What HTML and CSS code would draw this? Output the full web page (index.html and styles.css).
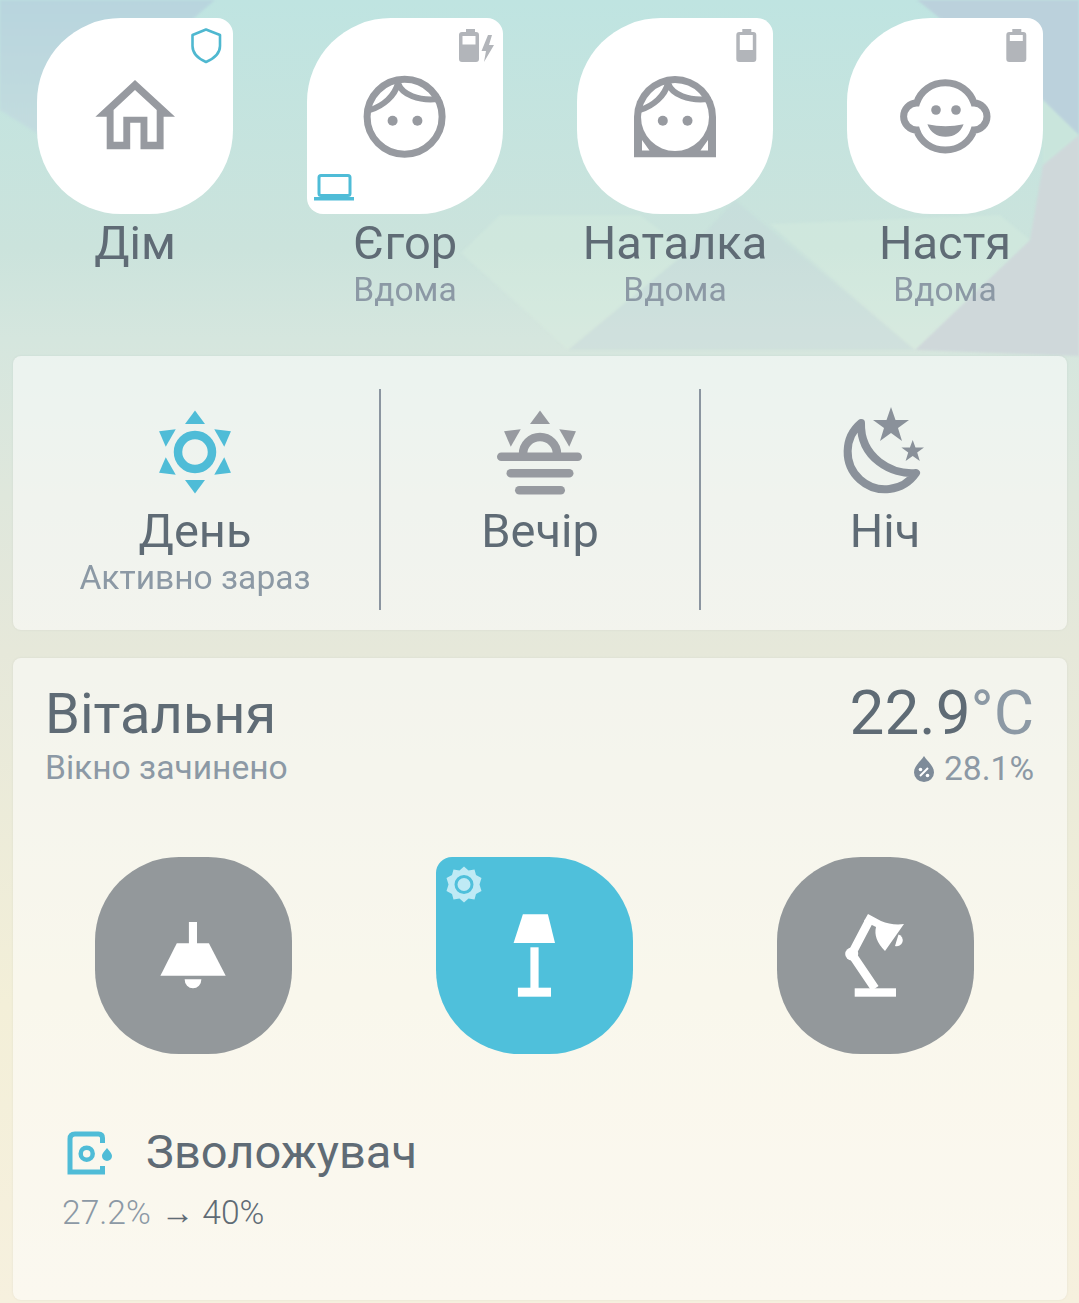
FILE: index.html
```html
<!DOCTYPE html>
<html lang="uk">
<head>
<meta charset="utf-8">
<title>Дім</title>
<link rel="stylesheet" href="styles.css">
</head>
<body>
<div class="screen">
  <svg class="backdrop" viewBox="0 0 1079 1303" width="1079" height="1303">
    <defs>
      <linearGradient id="bg" x1="0" y1="0" x2="0" y2="1">
        <stop offset="0" stop-color="#bfe4e1"/>
        <stop offset="0.19" stop-color="#cbe3dc"/>
        <stop offset="0.26" stop-color="#d5e6de"/>
        <stop offset="0.38" stop-color="#dfe7dc"/>
        <stop offset="0.5" stop-color="#e6e8da"/>
        <stop offset="0.77" stop-color="#f3efd8"/>
        <stop offset="1" stop-color="#f6f0de"/>
      </linearGradient>
      <linearGradient id="corner" x1="0" y1="0" x2="0" y2="1">
        <stop offset="0" stop-color="#b8d5de"/>
        <stop offset="1" stop-color="#c3dcdf"/>
      </linearGradient>
      <filter id="soften"><feGaussianBlur stdDeviation="1.200"/></filter>
    </defs>
    <rect width="1079" height="1303" fill="url(#bg)"/>
    <g filter="url(#soften)">
      <polygon points="0,0 215,0 110,90 40,135 0,110" fill="url(#corner)"/>
      <polygon points="461,253 568,350 688,251 640,215 500,215" fill="#dcf2e2" opacity=".3"/>
      <polygon points="735,200 915,350 568,350 688,251" fill="#c4d4dc" opacity=".3"/>
      <polygon points="770,224 915,350 1030,240 1000,215" fill="#dcf2e2" opacity=".3"/>
      <polygon points="1043,100 1079,135 1043,165" fill="#c9e5dc"/>
      <polygon points="1079,135 1043,165 1030,240 915,350 1079,356" fill="#cfd8da"/>
      <polygon points="917,0 1079,0 1079,135 1043,100" fill="#bbd1dc"/>
    </g>
  </svg>

  <div class="people">
    <div class="person">
      <div class="tile tile-corner-tr">
        <svg class="glyph" viewBox="0 0 196 196">
          <path class="grey" fill-rule="evenodd" d="M98 62L138 98.7H126.6V131.3H103.5V104.7H93.2V131.3H69.7V98.7H58.4ZM98 72L119.7 92V123.7H110.4V98.7H86.3V123.7H76.6V92Z"/>
          <path class="line-blue" d="M169 11.5L183 17V28C183 36 176 41 169 44C162 41 155.5 36 155.5 28V17Z"/>
        </svg>
      </div>
      <div class="name">Дім</div>
    </div>
    <div class="person">
      <div class="tile tile-corner-tr tile-corner-bl">
        <svg class="glyph" viewBox="0 0 196 196">
          <circle class="line-grey" cx="97.6" cy="98.7" r="37.5"/>
          <path class="line-grey hair" d="M91 65C95 77 112 83 131 81M91 65C88 78 76 88 63 92"/>
          <circle class="grey" cx="85.6" cy="102.7" r="5"/>
          <circle class="grey" cx="110.4" cy="102.7" r="5"/>
          <path class="soft" fill-rule="evenodd" d="M152 17a3 3 0 0 1 3-3h4v-3h9v3h1a3 3 0 0 1 3 3v24a3 3 0 0 1-3 3h-14a3 3 0 0 1-3-3ZM155.500 18v8.500h13V18Z"/>
          <polygon class="soft" points="181,17 174.500,33 179,33 177,44 187,27 182,27 185,17"/>
          <rect class="line-laptop" x="12" y="157.500" width="31" height="20" rx="2"/>
          <rect class="blue" x="7" y="179" width="40" height="3.500"/>
        </svg>
      </div>
      <div class="name">Єгор</div>
      <div class="sub">Вдома</div>
    </div>
    <div class="person">
      <div class="tile tile-corner-tr">
        <svg class="glyph" viewBox="0 0 196 196">
          <path class="grey" d="M57 139.300V99A41 41 0 0 1 139 99V139.300Z"/>
          <circle class="white" cx="98" cy="99" r="34"/>
          <path class="white" d="M65 132.500V122L72.500 132.500ZM131 132.500V122L123.500 132.500Z"/>
          <path class="line-grey hair" d="M91 65C95 77 112 83 131 81M91 65C88 78 76 88 63 92"/>
          <circle class="grey" cx="85.800" cy="102.700" r="5"/>
          <circle class="grey" cx="110.500" cy="102.700" r="5"/>
          <path class="soft" fill-rule="evenodd" d="M159.300 17a3 3 0 0 1 3-3h3v-3h9v3h2a3 3 0 0 1 3 3v24a3 3 0 0 1-3 3h-14a3 3 0 0 1-3-3ZM162.800 17V32H175.800V17Z"/>
        </svg>
      </div>
      <div class="name">Наталка</div>
      <div class="sub">Вдома</div>
    </div>
    <div class="person">
      <div class="tile tile-corner-tr">
        <svg class="glyph" viewBox="0 0 196 196">
          <path class="line-grey" d="M98.300 64.800C112 64.800 123 73 127 85C134 85 140 91 140 98.500C140 106 134 112 127 112C123 124 112 132 98.300 132C84.600 132 73.600 124 69.600 112C62.600 112 56.600 106 56.600 98.500C56.600 91 62.600 85 69.600 85C73.600 73 84.600 64.800 98.300 64.800Z"/>
          <circle class="grey" cx="89" cy="92" r="4.800"/>
          <circle class="grey" cx="109" cy="92" r="4.800"/>
          <path class="grey" d="M80.400 106.300Q98.500 110 116.600 106.300Q112 118.700 98.500 118.700Q85 118.700 80.400 106.300Z"/>
          <path class="soft" fill-rule="evenodd" d="M159.300 17a3 3 0 0 1 3-3h3v-3h9v3h2a3 3 0 0 1 3 3v24a3 3 0 0 1-3 3h-14a3 3 0 0 1-3-3ZM162.800 17V23H175.800V17Z"/>
        </svg>
      </div>
      <div class="name">Настя</div>
      <div class="sub">Вдома</div>
    </div>
  </div>

  <section class="card modes">
    <div class="mode mode-first">
      <svg class="mode-icon" viewBox="-45 -45 90 90">
        <circle class="line-sun" r="17"/>
        <g class="blue">
          <polygon points="0,-41.500 10,-28 -10,-28"/>
          <polygon points="0,-41.500 10,-28 -10,-28" transform="rotate(60)"/>
          <polygon points="0,-41.500 10,-28 -10,-28" transform="rotate(120)"/>
          <polygon points="0,-41.500 10,-28 -10,-28" transform="rotate(180)"/>
          <polygon points="0,-41.500 10,-28 -10,-28" transform="rotate(240)"/>
          <polygon points="0,-41.500 10,-28 -10,-28" transform="rotate(300)"/>
        </g>
      </svg>
      <div class="name">День</div>
      <div class="sub">Активно зараз</div>
    </div>
    <div class="mode mode-mid">
      <svg class="mode-icon" viewBox="-45 -45 90 90">
        <path class="line-grey sunset" d="M-17 2A17 17 0 0 1 17 2"/>
        <g class="grey">
          <polygon points="0,-41.500 10,-28 -10,-28"/>
          <polygon points="0,-41.500 10,-28 -10,-28" transform="rotate(60)"/>
          <polygon points="0,-41.500 10,-28 -10,-28" transform="rotate(-60)"/>
          <rect x="-43" y="0.500" width="85" height="8.500" rx="4.250"/>
          <rect x="-33.500" y="17" width="67" height="8.500" rx="4.250"/>
          <rect x="-25" y="34" width="50" height="8.500" rx="4.250"/>
        </g>
      </svg>
      <div class="name">Вечір</div>
    </div>
    <div class="mode mode-last">
      <svg class="mode-icon" viewBox="840 407 90 90">
        <path class="line-moon" d="M861 423A37.500 37.500 0 1 0 916 473C892 475 860 458 861 423Z"/>
        <polygon class="slate" points="891,407 895.500,420 909,420 898,428 902,441 891,433 880,441 884,428 873,420 886.500,420"/>
        <polygon class="slate" points="912.700,440 915.500,447.500 924,447.500 917.200,452.500 919.800,461 912.700,456 905.600,461 908.200,452.500 901.400,447.500 909.900,447.500"/>
      </svg>
      <div class="name">Ніч</div>
    </div>
  </section>

  <section class="card room">
    <header class="room-head">
      <div>
        <div class="room-title">Вітальня</div>
        <div class="sub sub-room">Вікно зачинено</div>
      </div>
      <div class="climate">
        <div class="temp">22.9<span class="temp-unit">°C</span></div>
        <div class="humidity">
          <svg class="drop" viewBox="0 0 20 26">
            <path class="slate-dark" d="M10 0C14 6 20 10 20 16.500A10 9.500 0 0 1 0 16.500C0 10 6 6 10 0Z"/>
            <path class="line-white" d="M6 20L14 12"/>
            <circle class="white" cx="6.500" cy="13.500" r="1.800"/>
            <circle class="white" cx="13.500" cy="19.500" r="1.800"/>
          </svg>
          <span>28.1%</span>
        </div>
      </div>
    </header>

    <div class="lamps">
      <div class="lamp lamp-off">
        <svg class="glyph" viewBox="95 857 197 197">
          <rect class="white" x="188.900" y="922" width="8.100" height="22"/>
          <polygon class="white" points="176.800,943.300 208.900,943.300 225.700,975.700 160.400,975.700"/>
          <path class="white" d="M184.600 979.300H201.400A8.400 9 0 0 1 184.600 979.300Z"/>
        </svg>
      </div>
      <div class="lamp lamp-on">
        <svg class="glyph" viewBox="436 857 197 197">
          <polygon class="white" points="522.900,914.300 547.900,914.300 555,943 513.600,943"/>
          <rect class="white" x="530.400" y="947.300" width="8.200" height="42"/>
          <rect class="white" x="517.900" y="987.700" width="33.100" height="9"/>
          <polygon class="pale" points="464,866.500 468.500,870.500 474.500,869.500 476,875 481.500,878 479.500,884.500 481.500,891 476,894 474.500,899.500 468.500,898.500 464,902.500 459.500,898.500 453.500,899.500 452,894 446.500,891 448.500,884.500 446.500,878 452,875 453.500,869.500 459.500,870.500"/>
          <circle class="pale ring-blue" cx="464" cy="884.500" r="8"/>
        </svg>
      </div>
      <div class="lamp lamp-off">
        <svg class="glyph" viewBox="777 857 197 197">
          <rect class="white" x="854.700" y="988.300" width="41.300" height="8.400"/>
          <path class="line-arm" d="M851.700 954L875 988.500M851.700 954L869 921"/>
          <circle class="white" cx="851.700" cy="954" r="6.500"/>
          <path class="white" d="M868 914L881 921C888 924 896 925 904 924L885 951C877 943 874 935 876 927L864 921Z"/>
          <path class="white" d="M898.500 934.500A6 6 0 0 1 895 946Z"/>
        </svg>
      </div>
    </div>

    <div class="device">
      <div class="device-head">
        <svg class="device-icon" viewBox="66 1132 48 48">
          <path class="line-device" d="M102.500 1145V1140Q102.500 1136 98.500 1136H75Q70 1136 70 1141V1174H102.500V1168"/>
          <circle class="line-ring" cx="86.700" cy="1155.700" r="6"/>
          <path class="blue" d="M107 1150C109 1153 112 1155 112 1158A5 5 0 0 1 102 1158C102 1155 105 1153 107 1150Z"/>
        </svg>
        <div class="device-name">Зволожувач</div>
      </div>
      <div class="device-state">
        <span class="state-now">27.2%</span>
        <span class="state-arrow">→</span>
        <span class="state-goal">40%</span>
      </div>
    </div>
  </section>
</div>
</body>
</html>
```

FILE: styles.css
```css
* { box-sizing: border-box; }
html, body { margin: 0; padding: 0; }
body { width: 1079px; height: 1303px; overflow: hidden; font-family: Roboto, "Liberation Sans", sans-serif; background: #e6e8da; }
.screen { position: relative; width: 1079px; height: 1303px; overflow: hidden; padding-top: 18px; }
.backdrop { position: absolute; left: 0; top: 0; display: block; }

.people { position: relative; display: grid; grid-template-columns: repeat(4, 270px); height: 338px; }
.person { display: flex; flex-direction: column; align-items: center; }
.tile { width: 196px; height: 196px; background: #fff; border-radius: 84px; overflow: hidden; }
.tile-corner-tr { border-top-right-radius: 16px; }
.tile-corner-bl { border-bottom-left-radius: 16px; }
.glyph { display: block; width: 100%; height: 100%; }

.name { font-size: 47px; line-height: 54px; color: #5f6b75; text-align: center; white-space: nowrap; }
.person .name { margin-top: 2px; }
.sub { font-size: 33.600px; line-height: 38px; color: #8c99a5; text-align: center; white-space: nowrap; margin-top: 1px; }

.card { position: relative; margin-left: 13px; width: 1054px; border-radius: 8px; background: rgba(255, 255, 255, 0.52); box-shadow: 0 0 2px rgba(120, 130, 130, 0.15); }
.modes { display: grid; grid-template-columns: 366px 322px 366px; height: 274px; padding: 33px 0 20px; }
.mode { display: flex; flex-direction: column; align-items: center; padding-top: 18px; }
.mode-first { padding-right: 2px; }
.mode-mid { border-left: 2px solid #8b95a0; border-right: 2px solid #8b95a0; }
.mode-last { padding-left: 2px; }
.mode-icon { display: block; width: 90px; height: 90px; margin-bottom: 7px; }

.room { margin-top: 28px; height: 642px; padding-top: 24px; }
.room-head { display: flex; justify-content: space-between; padding: 0 33px 0 32px; }
.room-title { font-size: 56px; line-height: 64px; color: #5f6b75; }
.sub-room { text-align: left; margin-top: 3px; }
.climate { text-align: right; }
.temp { font-size: 62px; line-height: 62px; color: #5f6b75; }
.temp-unit { color: #8c99a5; }
.humidity { display: flex; justify-content: flex-end; align-items: center; gap: 10px; font-size: 33.600px; line-height: 38px; margin-top: 6px; color: #8c99a5; }
.drop { display: block; width: 20px; height: 26px; }

.lamps { display: flex; gap: 144px; padding-left: 82px; margin-top: 69px; }
.lamp { width: 197px; height: 197px; border-radius: 84px; overflow: hidden; }
.lamp-off { background: #93989b; }
.lamp-on { background: #4fc0db; border-top-left-radius: 16px; }

.device { padding-left: 49px; margin-top: 74px; }
.device-head { display: flex; align-items: flex-start; }
.device-icon { display: block; width: 48px; height: 48px; margin: 2px 0 0 4px; }
.device-name { font-size: 47px; line-height: 48px; color: #5f6b75; margin-left: 32px; }
.device-state { display: flex; align-items: baseline; gap: 10px; font-size: 33.600px; line-height: 38px; margin-top: 16px; }
.state-now { color: #8c99a5; font-weight: 300; }
.state-arrow { color: #5f6b75; font-family: "Liberation Serif", serif; margin-right: -2px; }
.state-goal { color: #5f6b75; font-weight: 300; }

.grey { fill: #979aa0; }
.soft { fill: #b2b5ba; }
.blue { fill: #4fbcd7; }
.white { fill: #fff; }
.pale { fill: #bfeaf5; }
.slate { fill: #8a919a; }
.slate-dark { fill: #7e8b99; }
.line-grey { fill: none; stroke: #979aa0; stroke-width: 7; }
.hair { stroke-width: 6; stroke-linecap: round; }
.sunset { stroke-width: 8.500; }
.line-blue { fill: none; stroke: #4fb8d0; stroke-width: 2.600; stroke-linejoin: round; }
.line-laptop { fill: none; stroke: #4fbcd7; stroke-width: 3; }
.line-sun { fill: none; stroke: #4fbcd7; stroke-width: 8.500; }
.line-moon { fill: none; stroke: #8a919a; stroke-width: 8; stroke-linejoin: round; }
.line-white { fill: none; stroke: #fff; stroke-width: 2; }
.line-arm { fill: none; stroke: #fff; stroke-width: 8.500; }
.line-device { fill: none; stroke: #4fbcd7; stroke-width: 5; }
.line-ring { fill: none; stroke: #4fbcd7; stroke-width: 4.500; }
.ring-blue { stroke: #4fc0db; stroke-width: 3; }
```
